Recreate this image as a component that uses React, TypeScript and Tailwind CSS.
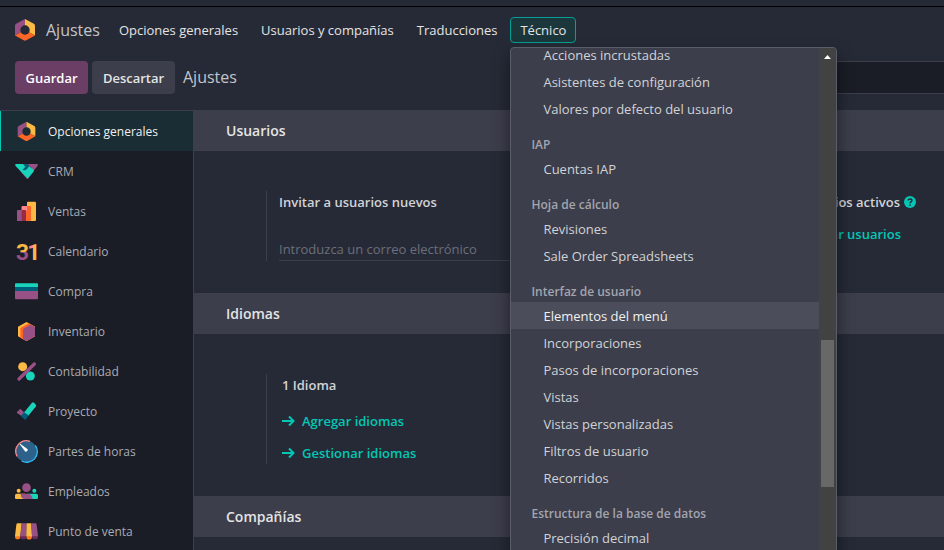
import { useId, type ReactNode } from 'react';

function Svg({ children, className = 'size-[23px] shrink-0 overflow-visible' }: { children: ReactNode; className?: string }) {
  return (
    <svg viewBox="0 0 69 69" className={className} aria-hidden="true">
      {children}
    </svg>
  );
}

function SettingsIcon({ className }: { className?: string }) {
  const id = useId();
  return (
    <Svg className={className}>
      <mask id={id}>
        <rect width="69" height="69" fill="#fff" />
        <circle cx="34.5" cy="34.5" r="12.5" fill="#000" />
      </mask>
      <g mask={`url(#${id})`}>
        <path d="M34.500 5L11 18Q8 20 8 23V49L34.500 34.500Z" fill="#985184" />
        <path d="M34.500 5L58 18Q61 20 61 23V49L34.500 34.500Z" fill="#fbb945" />
        <path d="M8 49L34.500 34.500L61 49L38 62Q34.500 64 31 62Z" fill="#fc6626" />
      </g>
    </Svg>
  );
}

function CrmIcon() {
  return (
    <Svg>
      <path d="M38 12H66Q71 13 68 17L56 32Z" fill="#985184" />
      <path d="M13 29L34 55Q38 59 42 54L30 36Z" fill="#985184" />
      <path d="M3 12H36L46 22L57 30L55 36L42 52Q38 56 34 52L1 17Q-1 13 3 12Z" fill="#1ad3bb" />
      <path d="M24 12H38L43 18L36 27Q30 33 23 29L31 20Z" fill="#005e7a" />
    </Svg>
  );
}

function SalesIcon() {
  return (
    <Svg>
      <rect x="36" y="5" width="27" height="58" rx="3" fill="#fbb945" />
      <rect x="20" y="18" width="28" height="45" rx="3" fill="#fc6626" />
      <path d="M23 18H36V32H20V21Q20 18 23 18Z" fill="#fc868b" />
      <path d="M9 30H21V63H6V33Q6 30 9 30Z" fill="#985184" />
      <path d="M20 30H30Q33 30 33 33V63H20Z" fill="#962b48" />
    </Svg>
  );
}

function CalendarIcon() {
  const three = useId();
  const one = useId();
  return (
    <Svg>
      <defs>
        <linearGradient id={three} gradientUnits="userSpaceOnUse" x1="0" y1="0" x2="0" y2="69">
          <stop offset="0.5" stopColor="#fbb945" />
          <stop offset="0.5" stopColor="#985184" />
        </linearGradient>
        <linearGradient id={one} gradientUnits="userSpaceOnUse" x1="40" y1="0" x2="66" y2="0">
          <stop offset="0.5" stopColor="#fc868b" />
          <stop offset="0.5" stopColor="#fbb945" />
        </linearGradient>
      </defs>
      <text y="60" fontSize="68" fontWeight="700" fontFamily="Roboto, sans-serif">
        <tspan x="3" fill={`url(#${three})`}>3</tspan>
        <tspan x="37" fill={`url(#${one})`}>1</tspan>
      </text>
    </Svg>
  );
}

function PurchaseIcon() {
  return (
    <Svg>
      <path d="M0 33H69V55Q69 58 66 58H3Q0 58 0 55Z" fill="#985184" />
      <path d="M3 10H66Q69 10 69 13V21H0V13Q0 10 3 10Z" fill="#1ad3bb" />
      <path d="M0 21H69V33H0Z" fill="#005e7a" />
    </Svg>
  );
}

function InventoryIcon() {
  return (
    <Svg>
      <path d="M34.500 6L60 20V49L34.500 63L9 49V20Z" fill="#fbb945" />
      <path d="M41 10L60 20V49L34.500 63L16 53V24Z" fill="#fc6626" />
      <path d="M46 14L60 21V49L37 62Q34 63 32 61L24 56V30Q24 27 27 25Z" fill="#985184" />
    </Svg>
  );
}

function AccountingIcon() {
  return (
    <Svg>
      <circle cx="23" cy="20" r="13.500" fill="#fbb945" />
      <circle cx="46" cy="48" r="13.500" fill="#1ad3bb" />
      <path d="M12 57L58 12" stroke="#985184" strokeWidth="10" strokeLinecap="round" />
    </Svg>
  );
}

function ProjectIcon() {
  return (
    <Svg>
      <path d="M16 26L27 37L20 48L6 39Q5 37 6 36Z" fill="#985184" />
      <path d="M51 8Q54 6 57 8L63 15Q64 18 62 20L40 47L24 41Z" fill="#1ad3bb" />
      <path d="M27 37L41 46L33 58Q31 60 28 58L18 49Z" fill="#005e7a" />
    </Svg>
  );
}

function TimesheetIcon() {
  return (
    <Svg>
      <circle cx="34.500" cy="34.500" r="32" fill="#2c6289" />
      <path d="M6 49A32 32 0 0 1 45 4" fill="none" stroke="#fc868b" strokeWidth="4" />
      <path d="M61 16A32 32 0 0 1 20 63" fill="none" stroke="#2ebcfa" strokeWidth="4" />
      <path d="M15 12L37 28Q38 35 31 34Z" fill="#fff" stroke="#fff" strokeWidth="2" strokeLinejoin="round" />
    </Svg>
  );
}

function EmployeesIcon() {
  return (
    <Svg>
      <circle cx="34.500" cy="23" r="13" fill="#985184" />
      <circle cx="11" cy="32" r="6" fill="#fbb945" />
      <circle cx="58" cy="32" r="6" fill="#1ad3bb" />
      <path d="M5 41H30V57H3Q0 57 0 54V46Q0 41 5 41Z" fill="#fbb945" />
      <path d="M38 41H64Q69 41 69 46V54Q69 57 66 57H38Z" fill="#1ad3bb" />
      <path d="M17 41H38Q50 41 53 57H30Q17 57 17 41Z" fill="#985184" />
    </Svg>
  );
}

function PosIcon() {
  return (
    <Svg>
      <path d="M0 48H16V50A8 8 0 0 1 0 50Z" fill="#f87a1a" />
      <path d="M34 48H51V50A8 8 0 0 1 34 50Z" fill="#f87a1a" />
      <path d="M16 48H34V50A9 8 0 0 1 16 50Z" fill="#6b2a5a" />
      <path d="M51 48H69V50A9 8 0 0 1 51 50Z" fill="#6b2a5a" />
      <path d="M8 10H20L16 49H0L4 14Q5 10 8 10Z" fill="#fbb945" />
      <path d="M20 10H35V49H16Z" fill="#985184" />
      <path d="M35 10H49L51 49H34Z" fill="#fbb945" />
      <path d="M49 10H61Q64 10 65 14L69 49H51Z" fill="#985184" />
    </Svg>
  );
}

const modules = [
  { label: 'Opciones generales', icon: <SettingsIcon />, active: true },
  { label: 'CRM', icon: <CrmIcon /> },
  { label: 'Ventas', icon: <SalesIcon /> },
  { label: 'Calendario', icon: <CalendarIcon /> },
  { label: 'Compra', icon: <PurchaseIcon /> },
  { label: 'Inventario', icon: <InventoryIcon /> },
  { label: 'Contabilidad', icon: <AccountingIcon /> },
  { label: 'Proyecto', icon: <ProjectIcon /> },
  { label: 'Partes de horas', icon: <TimesheetIcon /> },
  { label: 'Empleados', icon: <EmployeesIcon /> },
  { label: 'Punto de venta', icon: <PosIcon /> },
];

const menuGroups = [
  { title: '', items: ['Acciones incrustadas', 'Asistentes de configuración', 'Valores por defecto del usuario'] },
  { title: 'IAP', items: ['Cuentas IAP'] },
  { title: 'Hoja de cálculo', items: ['Revisiones', 'Sale Order Spreadsheets'] },
  {
    title: 'Interfaz de usuario',
    items: [
      'Elementos del menú',
      'Incorporaciones',
      'Pasos de incorporaciones',
      'Vistas',
      'Vistas personalizadas',
      'Filtros de usuario',
      'Recorridos',
    ],
  },
  { title: 'Estructura de la base de datos', items: ['Precisión decimal'] },
];

function TechnicalMenu() {
  return (
    <div className="absolute top-[30px] left-0 z-10 flex h-screen w-[327px] overflow-hidden rounded-t border border-[#5a5d6a] bg-[#3c3e4b] shadow-[0_8px_16px_rgba(0,0,0,0.5)]">
      <div className="-mt-[7px] flex-1">
        {menuGroups.map((group) => (
          <div key={group.items[0]}>
            {group.title && (
              <div className="flex h-[33px] items-end px-5 text-xs leading-5 font-semibold text-[#a3a5ae]">
                {group.title}
              </div>
            )}
            {group.items.map((item) => (
              <a
                key={item}
                href="#"
                className={`flex h-[27px] items-center px-8 ${
                  item === 'Elementos del menú' ? 'bg-[#4b4d5a] text-[#f0f0f0]' : 'text-[#d2d3d6]'
                }`}
              >
                {item}
              </a>
            ))}
          </div>
        ))}
      </div>
      <div className="flex w-[17px] flex-col items-center bg-[#424242]">
        <svg viewBox="0 0 7 4" className="mt-[7px] h-1 w-[7px]" aria-hidden="true">
          <path d="M0 4L3.500 0L7 4Z" fill="#fff" />
        </svg>
        <div className="mt-[281px] h-[147px] w-[13px] bg-[#686868]" />
      </div>
    </div>
  );
}

function Arrow() {
  return (
    <svg viewBox="0 0 13 12" className="h-3 w-[13px]" fill="none" stroke="currentColor" strokeWidth="2" aria-hidden="true">
      <path d="M0 6H11M7 1.500L11.500 6L7 10.500" />
    </svg>
  );
}

function ActionLink({ children }: { children: ReactNode }) {
  return (
    <a href="#" className="flex h-8 items-center gap-[7px] font-semibold whitespace-nowrap text-[#02c7b5]">
      <Arrow />
      {children}
    </a>
  );
}

function Section({ title, children }: { title: string; children?: ReactNode }) {
  return (
    <section className="border-t border-[#3c3e4b] first:border-t-0">
      <h2 className="flex h-10 items-center bg-[#3c3e4b] px-8 text-sm font-semibold text-[#e4e4e4]">{title}</h2>
      <div className="grid grid-cols-2 pt-10 pr-7 pb-8 pl-[72px]">{children}</div>
    </section>
  );
}

const navButton = 'h-[26px] rounded border px-[9px] whitespace-nowrap';

export default function App() {
  return (
    <div className="flex h-screen flex-col overflow-hidden bg-[#262a36] font-['Open_Sans',sans-serif] text-[13px] leading-5 text-[#e4e4e4]">
      <div className="h-[7px] shrink-0 border-b border-black" />
      <header className="flex h-[46px] shrink-0 items-center pl-3">
        <SettingsIcon className="size-[26px] shrink-0" />
        <span className="ml-2 text-base text-[#c4c5ca]">Ajustes</span>
        <nav className="ml-[9px] flex gap-[3px]">
          <button className={`${navButton} border-transparent`}>Opciones generales</button>
          <button className={`${navButton} border-transparent`}>Usuarios y compañías</button>
          <button className={`${navButton} border-transparent`}>Traducciones</button>
          <div className="relative">
            <button className={`${navButton} border-[#05a095] bg-[#1b373c]`} aria-expanded="true">Técnico</button>
            <TechnicalMenu />
          </div>
        </nav>
      </header>

      <div className="flex h-[58px] shrink-0 items-start border-b border-[#3c3e4b] pt-2 pl-[15px]">
        <button className="h-[33px] w-[73px] rounded bg-[#6b3e66] font-semibold text-white">Guardar</button>
        <button className="ml-1 h-[33px] w-[83px] rounded bg-[#3c3e4b] font-semibold">Descartar</button>
        <h1 className="ml-2 text-base leading-[33px] text-[#c4c5ca]">Ajustes</h1>
        <input
          type="search"
          aria-label="Buscar"
          className="ml-auto h-[33px] w-72 border-y border-l border-[#3c3e4b] bg-[#1b1d26] px-3 outline-none"
        />
      </div>

      <div className="flex min-h-0 flex-1">
        <aside className="w-[194px] shrink-0 overflow-hidden border-r border-[#3c3e4b] bg-[#1b1d26]">
          {modules.map((m) => (
            <a
              key={m.label}
              href="#"
              className={`flex h-10 items-center gap-2.5 border-l pl-3.5 text-xs ${
                m.active ? 'border-[#02c7b5] bg-[#1a2c34] text-[#f0f0f0]' : 'border-transparent text-[#a9abb3]'
              }`}
            >
              {m.icon}
              <span className="pt-0.5">{m.label}</span>
            </a>
          ))}
        </aside>

        <main className="min-w-0 flex-1 overflow-hidden">
          <Section title="Usuarios">
            <div className="h-[70px] border-l border-[#3c3e4b] pl-3">
              <label htmlFor="invite" className="block leading-[22px] font-semibold text-[#d2d3d6]">Invitar a usuarios nuevos</label>
              <input
                id="invite"
                placeholder="Introduzca un correo electrónico"
                className="mt-[23px] h-[25px] w-72 border-b border-[#3c3e4b] bg-transparent pt-0.5 placeholder-[#6b6e7a] outline-none"
              />
            </div>
            <div className="flex h-[70px] flex-col items-end border-l border-[#3c3e4b]">
              <div className="flex items-center gap-1 leading-[22px] font-semibold whitespace-nowrap text-[#d2d3d6]">
                Usuarios activos
                <svg viewBox="0 0 12 12" className="size-3" aria-hidden="true">
                  <circle cx="6" cy="6" r="6" fill="#02c7b5" />
                  <path d="M4.200 4.600C4.200 2.300 7.900 2.400 7.900 4.500C7.900 5.900 6 5.700 6 7.200M6 8.200V9.700" fill="none" stroke="#262a36" strokeWidth="1.500" />
                </svg>
              </div>
              <div className="mt-[5px] pr-[15px]">
                <ActionLink>Gestionar usuarios</ActionLink>
              </div>
            </div>
          </Section>
          <Section title="Idiomas">
            <div className="h-[90px] border-l border-[#3c3e4b] pl-[15px]">
              <div className="mb-[9px] leading-[22px] font-semibold text-[#d2d3d6]">1 Idioma</div>
              <ActionLink>Agregar idiomas</ActionLink>
              <ActionLink>Gestionar idiomas</ActionLink>
            </div>
          </Section>
          <Section title="Compañías" />
        </main>
      </div>
    </div>
  );
}
